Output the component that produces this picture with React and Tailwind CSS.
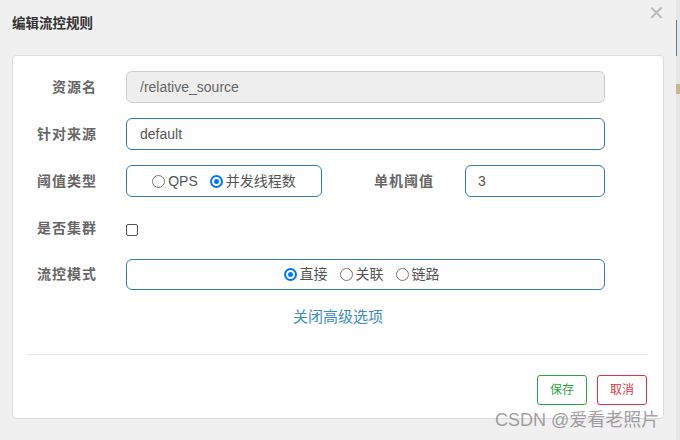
import React from "react";

const font = { fontFamily: '"Liberation Sans", "Noto Sans CJK SC", sans-serif' };

function Radio({ checked }) {
  return checked ? (
    <span className="inline-flex size-[13px] shrink-0 items-center justify-center rounded-full bg-[#0075ff]">
      <span className="size-[9px] rounded-full border-[2px] border-white bg-[#0075ff]" />
    </span>
  ) : (
    <span className="inline-block size-[13px] shrink-0 rounded-full border border-[#767676] bg-white" />
  );
}

function Option({ checked, label }) {
  return (
    <label className="flex items-center gap-[3px]">
      <Radio checked={checked} />
      <span>{label}</span>
    </label>
  );
}

function Label({ children, className = "w-[84px]" }) {
  return (
    <div className={`${className} shrink-0 text-right text-[14px] font-bold tracking-[1px] text-[#666]`}>
      {children}
    </div>
  );
}

export default function App() {
  return (
    <div className="relative flex h-[440px] w-[680px] overflow-hidden bg-[#f0f0f0] text-[#333]" style={font}>
      <div className="flex w-[676px] flex-col">
        {/* header */}
        <div className="relative flex h-[55px] items-start px-[12px] pt-[14px]">
          <h4 className="text-[13.5px] font-bold text-[#333]">编辑流控规则</h4>
          <span className="absolute right-[11px] top-[3px] text-[20px] leading-none text-[#bbb]">✕</span>
        </div>

        {/* body */}
        <div className="mx-[12px] flex h-[364px] flex-col rounded-[4px] border border-[#ddd] bg-white">
          <div className="flex flex-col gap-[15px] pr-[58px] pt-[15px]">
            <div className="flex items-center">
              <Label>资源名</Label>
              <div className="ml-[29px] flex h-[32px] flex-1 items-center rounded-[6px] border border-[#ccc] bg-[#eee] px-[13px] text-[14px] text-[#666]">
                /relative_source
              </div>
            </div>

            <div className="flex items-center">
              <Label>针对来源</Label>
              <div className="ml-[29px] flex h-[32px] flex-1 items-center rounded-[6px] border border-[#337ab7] bg-white px-[13px] text-[14px] text-[#555]">
                default
              </div>
            </div>

            <div className="flex items-center">
              <Label>阈值类型</Label>
              <div className="ml-[29px] flex h-[32px] w-[196px] items-center justify-center gap-[12px] rounded-[6px] border border-[#337ab7] text-[14px] text-[#555]">
                <Option label="QPS" />
                <Option checked label="并发线程数" />
              </div>
              <Label className="w-[112px]">单机阈值</Label>
              <div className="ml-[31px] flex h-[32px] flex-1 items-center rounded-[6px] border border-[#337ab7] px-[12px] text-[14px] text-[#555]">
                3
              </div>
            </div>

            <div className="flex h-[32px] items-center">
              <Label>是否集群</Label>
              <span className="ml-[29px] mt-[3px] size-[12px] rounded-[2px] border border-[#555] bg-white" />
            </div>

            <div className="flex items-center">
              <Label>流控模式</Label>
              <div className="ml-[29px] flex h-[31px] flex-1 items-center justify-center gap-[12px] rounded-[6px] border border-[#337ab7] pr-[8px] text-[14px] text-[#555]">
                <Option checked label="直接" />
                <Option label="关联" />
                <Option label="链路" />
              </div>
            </div>
          </div>

          <div className="mt-[16px] text-center text-[15px] text-[#3c8dbc]">关闭高级选项</div>

          <div className="mx-[15px] mt-[25px] border-t border-[#e5e5e5]" />

          <div className="flex justify-end gap-[10px] pr-[16px] pt-[20px]">
            <button className="h-[30px] w-[50px] rounded-[3px] border border-[#28a745] bg-white text-[12px] text-[#28a745]">保存</button>
            <button className="h-[30px] w-[50px] rounded-[3px] border border-[#dc3545] bg-white text-[12px] text-[#dc3545]">取消</button>
          </div>
        </div>
      </div>

      {/* page behind, right strip */}
      <div className="relative w-[4px] bg-[#e6e6e6]">
        <div className="mt-[20px] h-[36px] border-l border-[#5a7fa8]" />
        <div className="mt-[28px] h-[10px] bg-[#c9b98a]" />
      </div>

      <div className="absolute left-[495px] top-[407px] text-[18px] text-[#888]/80" style={font}>
        CSDN @爱看老照片
      </div>
    </div>
  );
}
